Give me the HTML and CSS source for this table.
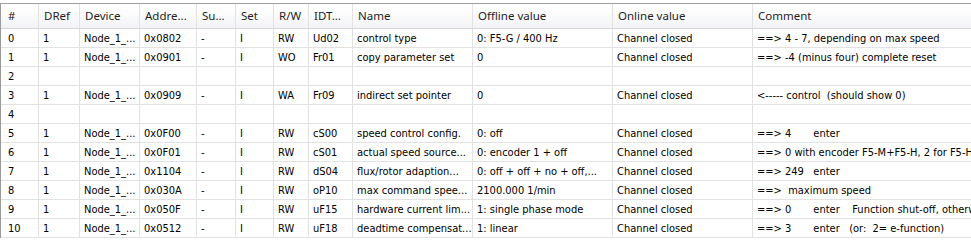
FILE: index.html
```html
<!DOCTYPE html>
<html>
<head>
<meta charset="utf-8">
<link rel="stylesheet" href="styles.css">
</head>
<body>
<div class="grid">
  <div class="row head">
    <div class="c c-num">#</div><div class="c">DRef</div><div class="c">Device</div><div class="c">Addre...</div><div class="c">Su...</div><div class="c">Set</div><div class="c">R/W</div><div class="c">IDT...</div><div class="c">Name</div><div class="c">Offline value</div><div class="c">Online value</div><div class="c">Comment</div>
  </div>
  <div class="row">
    <div class="c c-num">0</div><div class="c">1</div><div class="c">Node_1_...</div><div class="c">0x0802</div><div class="c">-</div><div class="c">I</div><div class="c">RW</div><div class="c">Ud02</div><div class="c">control type</div><div class="c">0: F5-G / 400 Hz</div><div class="c">Channel closed</div><div class="c">==&gt; 4 - 7, depending on max speed</div>
  </div>
  <div class="row">
    <div class="c c-num">1</div><div class="c">1</div><div class="c">Node_1_...</div><div class="c">0x0901</div><div class="c">-</div><div class="c">I</div><div class="c">WO</div><div class="c">Fr01</div><div class="c">copy parameter set</div><div class="c">0</div><div class="c">Channel closed</div><div class="c">==&gt; -4 (minus four) complete reset</div>
  </div>
  <div class="row">
    <div class="c c-num">2</div><div class="c"></div><div class="c"></div><div class="c"></div><div class="c"></div><div class="c"></div><div class="c"></div><div class="c"></div><div class="c"></div><div class="c"></div><div class="c"></div><div class="c"></div>
  </div>
  <div class="row">
    <div class="c c-num">3</div><div class="c">1</div><div class="c">Node_1_...</div><div class="c">0x0909</div><div class="c">-</div><div class="c">I</div><div class="c">WA</div><div class="c">Fr09</div><div class="c">indirect set pointer</div><div class="c">0</div><div class="c">Channel closed</div><div class="c">&lt;----- control&nbsp; (should show 0)</div>
  </div>
  <div class="row">
    <div class="c c-num">4</div><div class="c"></div><div class="c"></div><div class="c"></div><div class="c"></div><div class="c"></div><div class="c"></div><div class="c"></div><div class="c"></div><div class="c"></div><div class="c"></div><div class="c"></div>
  </div>
  <div class="row">
    <div class="c c-num">5</div><div class="c">1</div><div class="c">Node_1_...</div><div class="c">0x0F00</div><div class="c">-</div><div class="c">I</div><div class="c">RW</div><div class="c">cS00</div><div class="c">speed control config.</div><div class="c">0: off</div><div class="c">Channel closed</div><div class="c">==&gt; 4&nbsp;&nbsp;&nbsp;&nbsp;&nbsp;&nbsp; enter</div>
  </div>
  <div class="row">
    <div class="c c-num">6</div><div class="c">1</div><div class="c">Node_1_...</div><div class="c">0x0F01</div><div class="c">-</div><div class="c">I</div><div class="c">RW</div><div class="c">cS01</div><div class="c">actual speed source...</div><div class="c">0: encoder 1 + off</div><div class="c">Channel closed</div><div class="c">==&gt; 0 with encoder F5-M+F5-H, 2 for F5-H</div>
  </div>
  <div class="row">
    <div class="c c-num">7</div><div class="c">1</div><div class="c">Node_1_...</div><div class="c">0x1104</div><div class="c">-</div><div class="c">I</div><div class="c">RW</div><div class="c">dS04</div><div class="c">flux/rotor adaption...</div><div class="c">0: off + off + no + off,...</div><div class="c">Channel closed</div><div class="c">==&gt; 249&nbsp;&nbsp; enter</div>
  </div>
  <div class="row">
    <div class="c c-num">8</div><div class="c">1</div><div class="c">Node_1_...</div><div class="c">0x030A</div><div class="c">-</div><div class="c">I</div><div class="c">RW</div><div class="c">oP10</div><div class="c">max command spee...</div><div class="c">2100.000 1/min</div><div class="c">Channel closed</div><div class="c">==&gt;&nbsp; maximum speed</div>
  </div>
  <div class="row">
    <div class="c c-num">9</div><div class="c">1</div><div class="c">Node_1_...</div><div class="c">0x050F</div><div class="c">-</div><div class="c">I</div><div class="c">RW</div><div class="c">uF15</div><div class="c">hardware current lim...</div><div class="c">1: single phase mode</div><div class="c">Channel closed</div><div class="c">==&gt; 0&nbsp;&nbsp;&nbsp;&nbsp;&nbsp;&nbsp; enter&nbsp;&nbsp;&nbsp; Function shut-off, otherwise</div>
  </div>
  <div class="row">
    <div class="c c-num">10</div><div class="c">1</div><div class="c">Node_1_...</div><div class="c">0x0512</div><div class="c">-</div><div class="c">I</div><div class="c">RW</div><div class="c">uF18</div><div class="c">deadtime compensat...</div><div class="c">1: linear</div><div class="c">Channel closed</div><div class="c">==&gt; 3&nbsp;&nbsp;&nbsp;&nbsp;&nbsp;&nbsp; enter&nbsp;&nbsp; (or:&nbsp; 2= e-function)</div>
  </div>
</div>
</body>
</html>
```

FILE: styles.css
```css
html, body {
  margin: 0;
  padding: 0;
  background: #ffffff;
  overflow: hidden;
}
body {
  width: 971px;
  height: 240px;
  padding-top: 3px;
  box-sizing: border-box;
}
.grid {
  width: 971px;
  box-sizing: border-box;
  border-top: 1px solid #a0a0a0;
  border-left: 1px solid #9a9a9a;
  font-family: "DejaVu Sans", sans-serif;
  font-stretch: condensed;
  font-size: 11px;
  color: #000;
  overflow: hidden;
}
.row {
  display: grid;
  grid-template-columns: 38px 41px 60px 57px 39px 38px 35px 44px 120px 140px 140px minmax(0, 1fr);
  height: 19px;
}
.row.head {
  height: 25px;
  background: linear-gradient(#ffffff 0%, #fbfbfc 45%, #f1f2f4 100%);
  font-family: "Noto Sans", sans-serif;
  font-stretch: normal;
  font-size: 11.5px;
  color: #1e1e1e;
}
.row.head .c {
  border-bottom-color: #d5d5d5;
  padding-left: 5px;
}
.c {
  box-sizing: border-box;
  border-right: 1px solid #e2e2e2;
  border-bottom: 1px solid #e2e2e2;
  padding-left: 4px;
  white-space: nowrap;
  overflow: hidden;
  display: flex;
  align-items: center;
  line-height: 1;
}
.c-num {
  padding-left: 7px;
}
.row.head .c-num {
  padding-left: 7px;
}
.row .c:last-child {
  border-right: none;
}
```
